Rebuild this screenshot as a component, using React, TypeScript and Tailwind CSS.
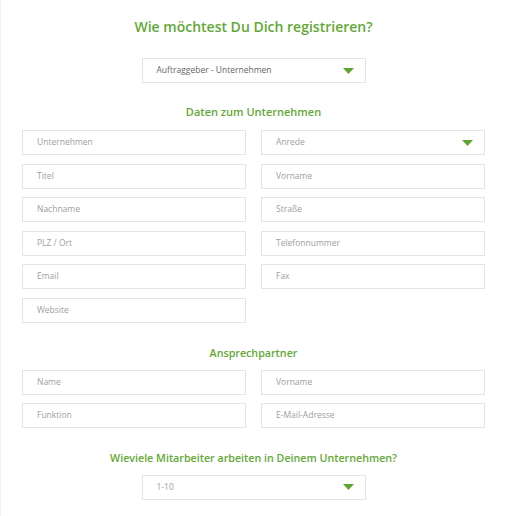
import React from "react"

const font = { fontFamily: '"Open Sans", "Noto Sans", sans-serif' }

const Arrow = () => (
    <svg width="11" height="6" viewBox="0 0 11 6" className="shrink-0">
        <polygon points="0,0 11,0 5.5,6" fill="#5fa533" />
    </svg>
)

const Field = ({ label }: { label: string }) => (
    <div className="h-[25px] border border-[#e4e4e4] bg-white flex items-center pl-[14px] text-[8.5px] text-[#a0a0a0]">
        {label}
    </div>
)

const Select = ({ label, dark, className }: { label: string; dark?: boolean; className?: string }) => (
    <div className={`h-[25px] border border-[#e4e4e4] bg-white flex items-center justify-between pl-[14px] pr-[11px] text-[8.5px] ${dark ? "text-[#666]" : "text-[#a0a0a0]"} ${className ?? ""}`}>
        <span>{label}</span>
        <Arrow />
    </div>
)

const Heading = ({ children, className }: { children: React.ReactNode; className?: string }) => (
    <h2 className={`h-4 leading-4 text-center font-semibold text-[#62a836] ${className ?? ""}`}>{children}</h2>
)

export default function App() {
    const firma = [
        "Unternehmen", "Anrede",
        "Titel", "Vorname",
        "Nachname", "Straße",
        "PLZ / Ort", "Telefonnummer",
        "Email", "Fax",
        "Website",
    ]

    return (
        <div className="w-[510px] h-[516px] bg-white border-l border-[#f2f2f2] overflow-hidden" style={font}>
            <div className="w-[463px] ml-[21px] pt-[17px]">
                <h1 className="h-5 leading-5 text-center text-[14px] font-semibold text-[#62a836]">
                    Wie möchtest Du Dich registrieren?
                </h1>
                <div className="flex justify-center mt-[21px]">
                    <Select label="Auftraggeber - Unternehmen" dark className="w-[224px]" />
                </div>

                <Heading className="mt-[21px] text-[11px]">Daten zum Unternehmen</Heading>
                <div className="grid grid-cols-2 gap-x-[15px] gap-y-[8.5px] mt-[10px]">
                    {firma.map((f) =>
                        f === "Anrede" ? <Select key={f} label={f} /> : <Field key={f} label={f} />
                    )}
                </div>

                <Heading className="mt-[22px] text-[10.7px]">Ansprechpartner</Heading>
                <div className="grid grid-cols-2 gap-x-[15px] gap-y-[8px] mt-[9px]">
                    <Field label="Name" />
                    <Field label="Vorname" />
                    <Field label="Funktion" />
                    <Field label="E-Mail-Adresse" />
                </div>

                <Heading className="mt-[22px] text-[10.7px]">Wieviele Mitarbeiter arbeiten in Deinem Unternehmen?</Heading>
                <div className="flex justify-center mt-[9px]">
                    <Select label="1-10" className="w-[224px]" />
                </div>
            </div>
        </div>
    )
}
